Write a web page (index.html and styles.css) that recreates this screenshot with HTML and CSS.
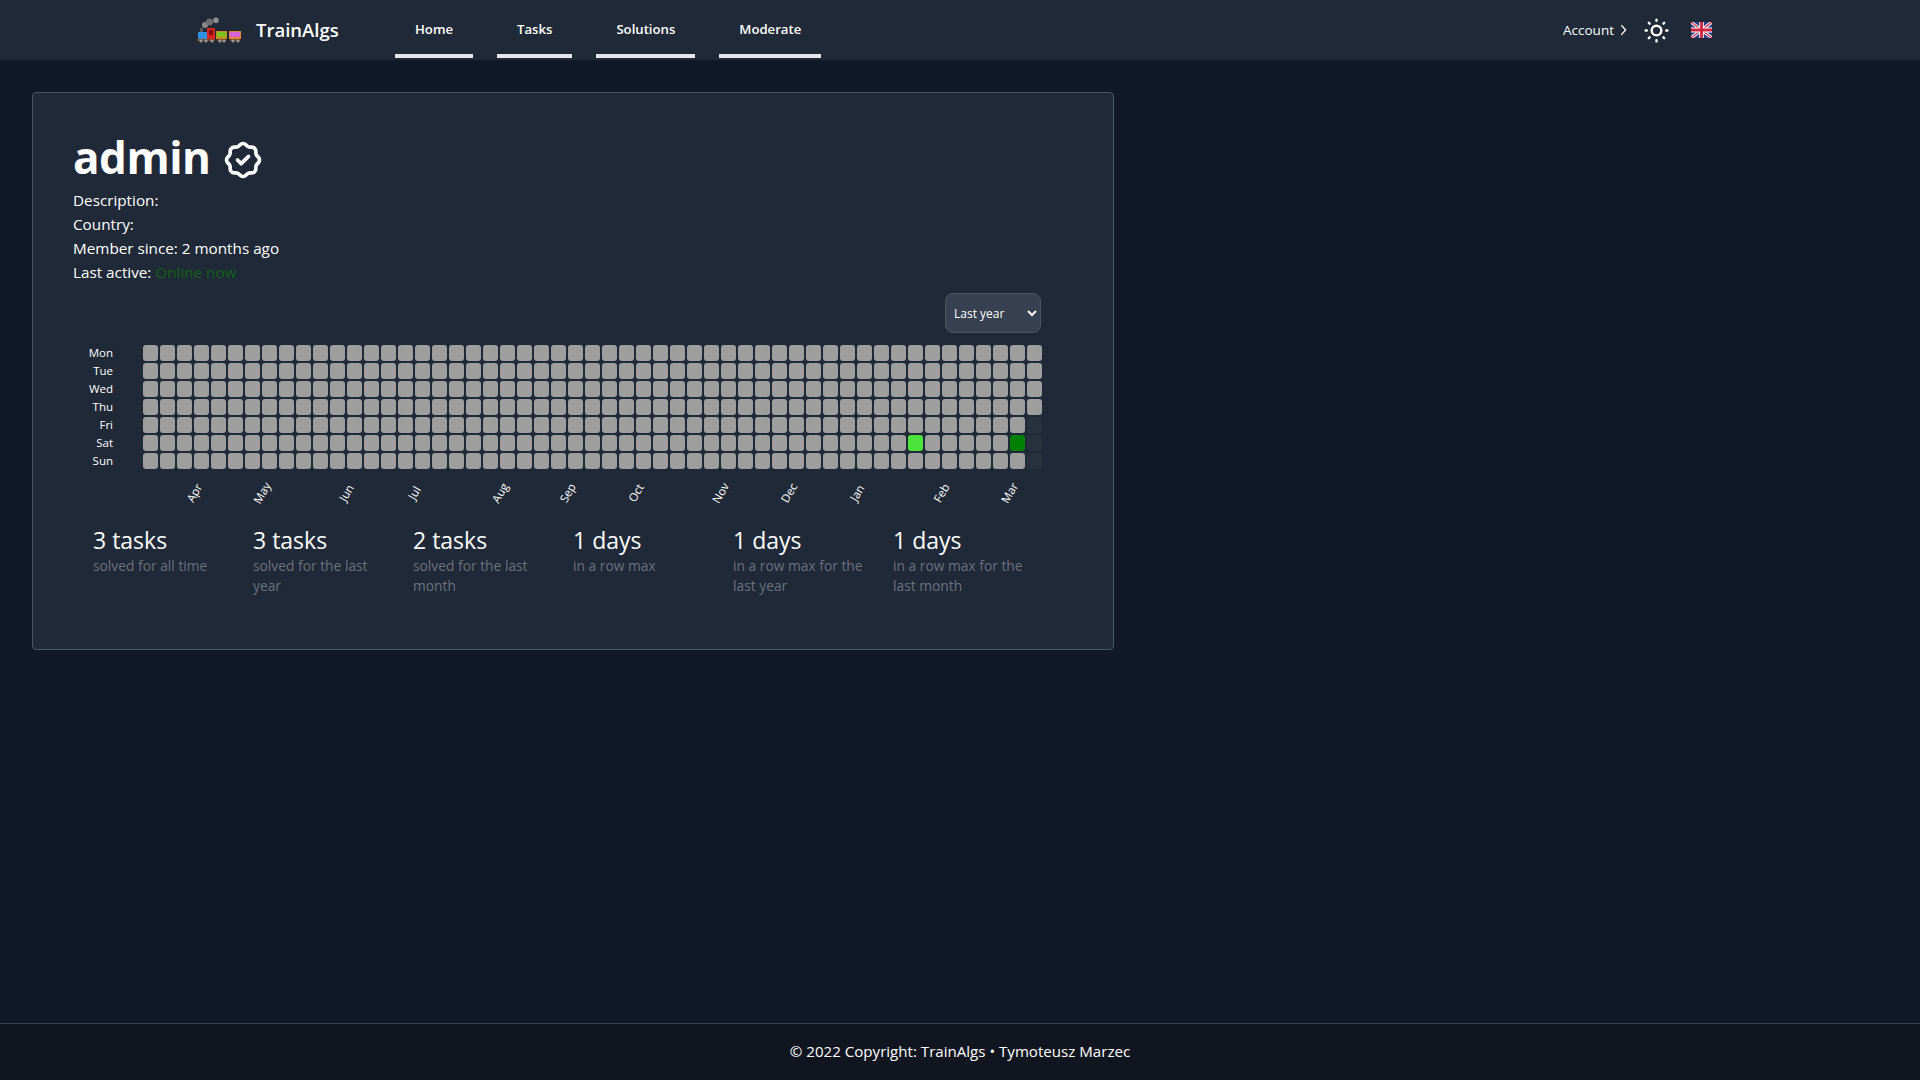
FILE: index.html
```html
<!DOCTYPE html>
<html lang="en">
<head>
    <meta charset="UTF-8">
    <meta name="viewport" content="width=device-width, initial-scale=1.0">
    <title>TrainAlgs</title>
    <link rel="stylesheet" href="styles.css">
</head>
<body>
    <nav class="navbar">
        <a class="brand" href="#">
            <svg class="brand-logo" viewBox="0 0 44 26" width="44" height="26">
                <circle cx="8" cy="8" r="3" fill="#8a8a8a"/>
                <circle cx="12.5" cy="5" r="3.6" fill="#6f6f6f"/>
                <circle cx="19" cy="3.2" r="2.8" fill="#8f8f8f"/>
                <rect x="3" y="11" width="3" height="4" fill="#5b5b5b"/>
                <rect x="1" y="15" width="9" height="7" fill="#2f8fe0"/>
                <rect x="10" y="11" width="8" height="11" fill="#d8261c"/>
                <rect x="12" y="13" width="4" height="5" fill="#7d0f0a"/>
                <rect x="19" y="14" width="11" height="8" fill="#c98a22"/>
                <rect x="20" y="15" width="9" height="5" fill="#7fc41c"/>
                <rect x="32" y="14" width="12" height="8" fill="#e0843a"/>
                <rect x="33" y="15" width="10" height="5" fill="#d862d8"/>
                <rect x="0" y="22" width="18" height="2" fill="#7a4a22"/>
                <rect x="20" y="22" width="9" height="2" fill="#7a4a22"/>
                <rect x="33" y="22" width="10" height="2" fill="#7a4a22"/>
                <circle cx="4" cy="24" r="1.6" fill="#9a9a9a"/>
                <circle cx="9" cy="24" r="1.6" fill="#9a9a9a"/>
                <circle cx="15" cy="24" r="1.6" fill="#9a9a9a"/>
                <circle cx="23" cy="24" r="1.6" fill="#9a9a9a"/>
                <circle cx="27" cy="24" r="1.6" fill="#9a9a9a"/>
                <circle cx="36" cy="24" r="1.6" fill="#9a9a9a"/>
                <circle cx="41" cy="24" r="1.6" fill="#9a9a9a"/>
            </svg>
            <span class="brand-name">TrainAlgs</span>
        </a>
        <ul class="nav-links">
            <li><a href="#">Home</a></li>
            <li><a href="#">Tasks</a></li>
            <li><a href="#">Solutions</a></li>
            <li><a href="#">Moderate</a></li>
        </ul>
        <div class="nav-right">
            <a class="account" href="#">Account
                <svg viewBox="0 0 8 14" width="7" height="12"><path d="M1.5 1.5l5 5.5l-5 5.5" fill="none" stroke="currentColor" stroke-width="1.5"/></svg>
            </a>
            <svg class="sun" viewBox="0 0 24 24" width="29" height="29" fill="none" stroke="currentColor" stroke-width="2" stroke-linecap="round" stroke-linejoin="round">
                <circle cx="12" cy="12" r="4"/>
                <path d="M3 12h1m8 -9v1m8 8h1m-9 8v1m-6.4 -15.4l.7 .7m12.1 -.7l-.7 .7m0 11.4l.7 .7m-12.1 -.7l-.7 .7"/>
            </svg>
            <svg class="flag" viewBox="0 0 60 40" width="21" height="16" preserveAspectRatio="none">
                <rect width="60" height="40" fill="#2b3f87"/>
                <path d="M0 0L60 40M60 0L0 40" stroke="#fff" stroke-width="8"/>
                <path d="M0 0L60 40M60 0L0 40" stroke="#d0233c" stroke-width="3"/>
                <path d="M30 0V40M0 20H60" stroke="#fff" stroke-width="13"/>
                <path d="M30 0V40M0 20H60" stroke="#d0233c" stroke-width="8"/>
            </svg>
        </div>
    </nav>

    <main class="content">
        <section class="profile-card">
            <h1 class="username">admin
                <svg class="verified" viewBox="0 0 24 24" width="44" height="44" fill="none" stroke="currentColor" stroke-width="2" stroke-linecap="round" stroke-linejoin="round">
                    <path d="M5 7.2a2.2 2.2 0 0 1 2.2 -2.2h1a2.2 2.2 0 0 0 1.55 -.64l.7 -.7a2.2 2.2 0 0 1 3.12 0l.7 .7c.412 .41 .97 .64 1.55 .64h1a2.2 2.2 0 0 1 2.2 2.2v1c0 .58 .23 1.138 .64 1.55l.7 .7a2.2 2.2 0 0 1 0 3.12l-.7 .7a2.2 2.2 0 0 0 -.64 1.55v1a2.2 2.2 0 0 1 -2.2 2.2h-1a2.2 2.2 0 0 0 -1.55 .64l-.7 .7a2.2 2.2 0 0 1 -3.12 0l-.7 -.7a2.2 2.2 0 0 0 -1.55 -.64h-1a2.2 2.2 0 0 1 -2.2 -2.2v-1a2.2 2.2 0 0 0 -.64 -1.55l-.7 -.7a2.2 2.2 0 0 1 0 -3.12l.7 -.7a2.2 2.2 0 0 0 .64 -1.55v-1"/>
                    <path d="M9 12l2 2l4 -4"/>
                </svg>
            </h1>
            <p>Description:</p>
            <p>Country:</p>
            <p>Member since: 2 months ago</p>
            <p>Last active: <span class="online">Online now</span></p>

            <div class="activity">
                <div class="range">
                    <select class="range-select">
                        <option>Last year</option>
                        <option>Last month</option>
                        <option>All time</option>
                    </select>
                </div>
                <div class="heatmap">
                    <div class="days">
                        <span>Mon</span>
                        <span>Tue</span>
                        <span>Wed</span>
                        <span>Thu</span>
                        <span>Fri</span>
                        <span>Sat</span>
                        <span>Sun</span>
                    </div>
                    <div class="cells" id="cells"></div>
                </div>
                <div class="months" id="months"></div>
            </div>

            <div class="stats">
                <div class="stat">
                    <div class="stat-value">3 tasks</div>
                    <div class="stat-label">solved for all time</div>
                </div>
                <div class="stat">
                    <div class="stat-value">3 tasks</div>
                    <div class="stat-label">solved for the last year</div>
                </div>
                <div class="stat">
                    <div class="stat-value">2 tasks</div>
                    <div class="stat-label">solved for the last month</div>
                </div>
                <div class="stat">
                    <div class="stat-value">1 days</div>
                    <div class="stat-label">in a row max</div>
                </div>
                <div class="stat">
                    <div class="stat-value">1 days</div>
                    <div class="stat-label">in a row max for the last year</div>
                </div>
                <div class="stat">
                    <div class="stat-value">1 days</div>
                    <div class="stat-label">in a row max for the last month</div>
                </div>
            </div>
        </section>
    </main>

    <footer class="footer">© 2022 Copyright: TrainAlgs • Tymoteusz Marzec</footer>

    <script src="app.js"></script>
</body>
</html>
```

FILE: styles.css
```css
* {
    box-sizing: border-box;
}
body {
    margin: 0;
    min-height: 1080px;
    display: flex;
    flex-direction: column;
    font-family: "Open Sans", "Noto Sans", sans-serif;
    font-size: 15.25px;
    line-height: 24px;
    color: #fff;
    background-color: #111827;
}
a {
    color: inherit;
    text-decoration: none;
}
p {
    margin: 0;
}
.navbar {
    height: 60px;
    display: flex;
    padding: 0 208px 0 197px;
    background-color: #1f2937;
}
.brand {
    display: flex;
    align-items: center;
    gap: 15px;
    width: 198px;
}
.brand-name {
    font-size: 18.5px;
    font-weight: 600;
}
.nav-links {
    display: flex;
    gap: 24px;
    margin: 0;
    padding: 0;
    list-style: none;
}
.nav-links a {
    display: block;
    height: 58px;
    padding: 17px 20px 0;
    font-size: 13.15px;
    font-weight: 600;
    border-bottom: 4px solid #e5e7eb;
}
.nav-right {
    display: flex;
    align-items: center;
    margin-left: auto;
}
.account {
    display: flex;
    align-items: center;
    gap: 6px;
    font-size: 13.5px;
}
.sun {
    margin-left: 15px;
}
.flag {
    margin-left: 20px;
}
.content {
    flex: 1;
    padding: 32px;
}
.profile-card {
    width: 1082px;
    height: 558px;
    padding: 40px;
    background-color: #1f2937;
    border: 1px solid #4b5563;
    border-radius: 4px;
}
.username {
    display: flex;
    align-items: center;
    gap: 11px;
    height: 55px;
    margin: 0;
    padding-bottom: 8px;
    font-size: 44px;
    font-weight: 700;
    line-height: 46px;
    letter-spacing: -0.5px;
}
.verified {
    margin-top: 6px;
}
.online {
    color: #116315;
}
.activity {
    width: 969px;
    margin-top: 9px;
}
.range {
    display: flex;
    justify-content: flex-end;
    padding-right: 1px;
}
.range-select {
    width: 96px;
    height: 40px;
    padding: 0 4px;
    font-family: inherit;
    font-size: 12px;
    color: #fff;
    color-scheme: dark;
    background-color: #374151;
    border: 1px solid #4b5563;
    border-radius: 8px;
}
.heatmap {
    display: flex;
    margin-top: 12px;
}
.days {
    width: 70px;
    padding-right: 30px;
    display: grid;
    grid-auto-rows: 18px;
    font-size: 11.5px;
    font-weight: 500;
    line-height: 16px;
    text-align: right;
}
.cells {
    display: grid;
    grid-auto-flow: column;
    grid-template-rows: repeat(7, 16px);
    grid-auto-columns: 15px;
    gap: 2px;
}
.cell {
    background-color: #9e9e9e;
    border-radius: 3px;
}
.cell.empty {
    background-color: #27303d;
}
.cell.low {
    background-color: #4be33c;
}
.cell.high {
    background-color: #008000;
}
.months {
    display: grid;
    grid-template-columns: repeat(53, 15px);
    column-gap: 2px;
    height: 36px;
    margin-left: 70px;
    margin-top: 4px;
}
.month {
    width: 0;
    display: flex;
    justify-content: center;
    align-items: center;
    font-size: 11.5px;
    line-height: 16px;
}
.month span {
    flex: none;
    transform: rotate(-60deg);
}
.stats {
    display: grid;
    grid-template-columns: repeat(6, 160px);
    margin-top: 13px;
}
.stat {
    padding: 0 8px 0 20px;
}
.stat-value {
    font-size: 23px;
    line-height: 32px;
}
.stat-label {
    font-size: 13.8px;
    line-height: 20px;
    color: #6b7280;
}
.footer {
    height: 57px;
    padding-top: 15px;
    font-size: 15.1px;
    text-align: center;
    background-color: #111520;
    border-top: 1px solid #374151;
}
```

FILE: app.js
```js
const WEEKS = 53;
const DAYS = 7;

// week -> first column of the month label
const months = [
    ['Apr', 3], ['May', 7], ['Jun', 12], ['Jul', 16], ['Aug', 21], ['Sep', 25],
    ['Oct', 29], ['Nov', 34], ['Dec', 38], ['Jan', 42], ['Feb', 47], ['Mar', 51]
];

const solved = { '45-5': 'low', '51-5': 'high' };

const cells = document.getElementById('cells');
for (let week = 0; week < WEEKS; week++) {
    for (let day = 0; day < DAYS; day++) {
        const cell = document.createElement('div');
        cell.className = 'cell';
        if (week === WEEKS - 1 && day > 3) {
            cell.classList.add('empty');
        }
        if (solved[week + '-' + day]) {
            cell.classList.add(solved[week + '-' + day]);
        }
        cells.appendChild(cell);
    }
}

const monthsRow = document.getElementById('months');
months.forEach(([name, week]) => {
    const month = document.createElement('div');
    month.className = 'month';
    month.style.gridColumnStart = week + 1;
    month.innerHTML = `<span>${name}</span>`;
    monthsRow.appendChild(month);
});
```
